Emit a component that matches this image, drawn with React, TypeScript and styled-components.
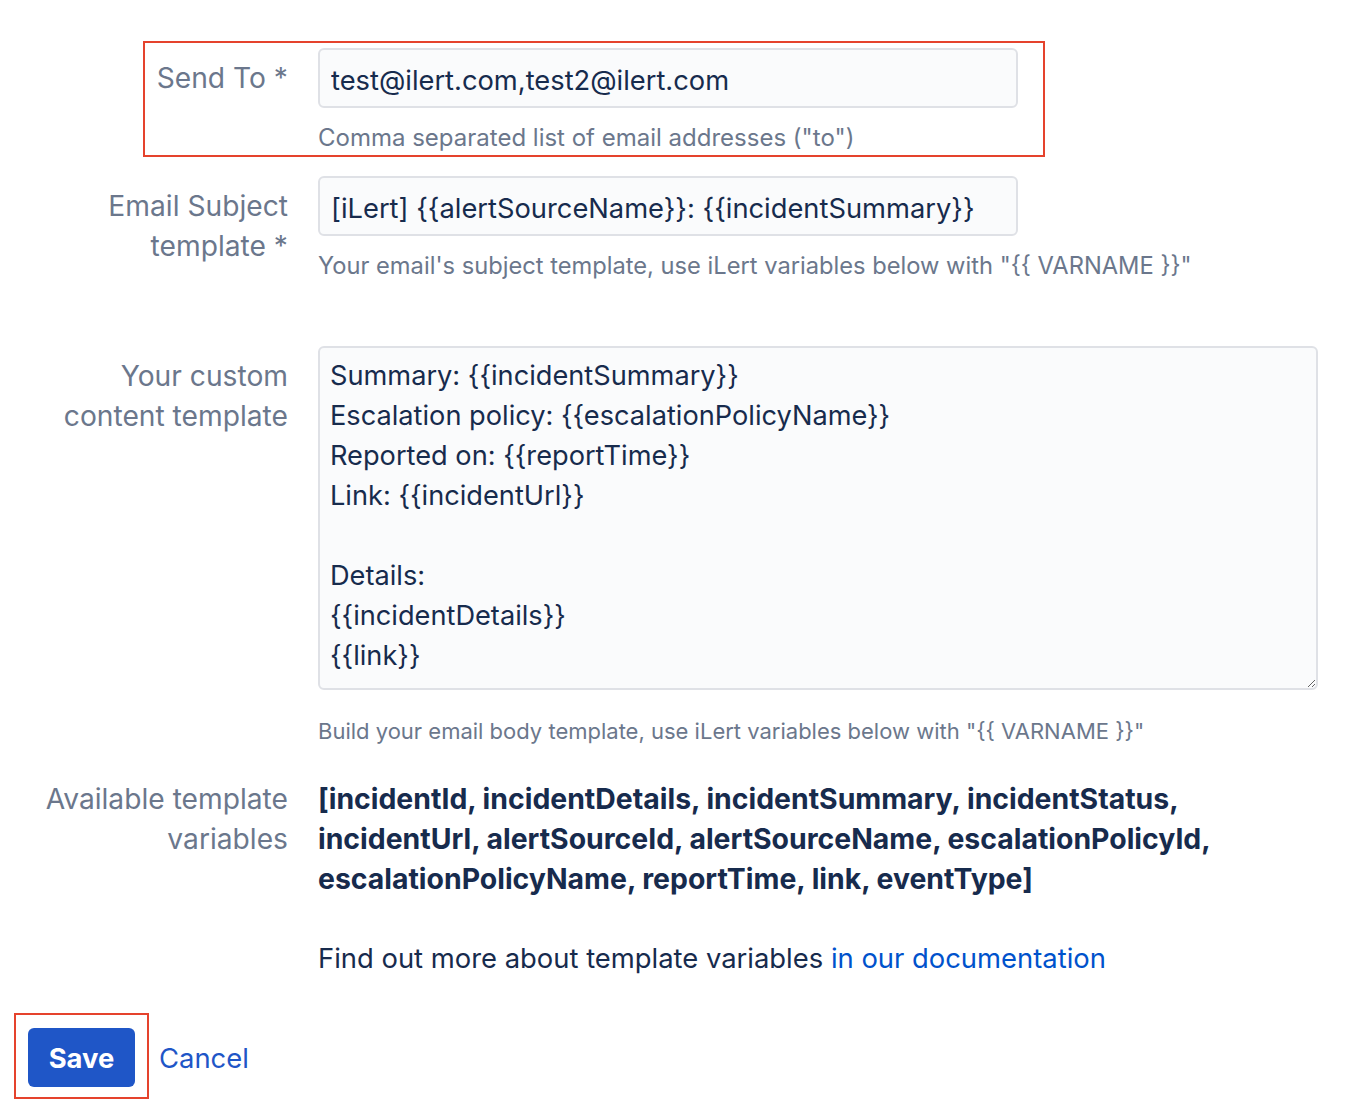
import React from "react";
import styled, { createGlobalStyle } from "styled-components";

const Global = createGlobalStyle`
  html, body { margin: 0; padding: 0; background: #ffffff; }
  body {
    font-family: Inter, "Noto Sans", "Liberation Sans", sans-serif;
    color: #172b4d;
    -webkit-font-smoothing: antialiased;
  }
`;

const Page = styled.div`
  width: 1372px;
  padding-top: 48px;
  padding-bottom: 20px;
  box-sizing: border-box;
`;

const Row = styled.div<{ $mt?: number }>`
  position: relative;
  display: grid;
  grid-template-columns: 288px 1000px;
  column-gap: 30px;
  margin-top: ${(p) => p.$mt ?? 0}px;
`;

const Label = styled.label<{ $pt?: number }>`
  text-align: right;
  font-size: 28.2px;
  line-height: 40px;
  color: #6b778c;
  padding-top: ${(p) => p.$pt ?? 10}px;
`;

const Field = styled.div`
  display: flex;
  flex-direction: column;
`;

const Input = styled.input`
  box-sizing: border-box;
  width: 700px;
  height: 60px;
  border: 2px solid #dfe1e6;
  border-radius: 6px;
  background: #fafbfc;
  padding: 10px 11px 6px 11px;
  font-family: inherit;
  font-size: 27.3px;
  line-height: 40px;
  color: #172b4d;
  outline: none;
`;

const TextArea = styled.textarea`
  box-sizing: border-box;
  width: 1000px;
  height: 344px;
  border: 2px solid #dfe1e6;
  border-radius: 6px;
  background: #fafbfc;
  padding: 8px 11px 8px 10px;
  font-family: inherit;
  font-size: 27.2px;
  line-height: 40px;
  color: #172b4d;
  outline: none;
  resize: vertical;
`;

const Helper = styled.div<{ $size?: number; $mt?: number }>`
  margin-top: ${(p) => p.$mt ?? 14}px;
  font-size: ${(p) => p.$size ?? 23.8}px;
  line-height: 32px;
  color: #6b778c;
`;

const Vars = styled.div`
  font-size: 28.4px;
  line-height: 40px;
  font-weight: 700;
  color: #172b4d;
`;

const Text = styled.div`
  font-size: 27.4px;
  line-height: 40px;
  color: #172b4d;
  margin-top: 39px;
`;

const Link = styled.a`
  color: #0052cc;
  text-decoration: none;
`;

const Actions = styled.div`
  position: relative;
  display: flex;
  align-items: center;
  gap: 24px;
  margin-top: 50px;
  padding-left: 28px;
`;

const SaveButton = styled.button`
  height: 59px;
  width: 107px;
  border: none;
  border-radius: 6px;
  background: #1f56c7;
  color: #ffffff;
  font-family: inherit;
  font-weight: 700;
  font-size: 27.4px;
  cursor: pointer;
`;

const CancelLink = styled.a`
  color: #1f56c7;
  font-size: 27.4px;
  text-decoration: none;
`;

const Annotation = styled.div<{ $l: number; $t: number; $w: number; $h: number }>`
  position: absolute;
  left: ${(p) => p.$l}px;
  top: ${(p) => p.$t}px;
  width: ${(p) => p.$w}px;
  height: ${(p) => p.$h}px;
  border: 2px solid #e5432d;
  box-sizing: border-box;
  pointer-events: none;
`;

const body = `Summary: {{incidentSummary}}
Escalation policy: {{escalationPolicyName}}
Reported on: {{reportTime}}
Link: {{incidentUrl}}

Details:
{{incidentDetails}}
{{link}}`;

export default function App() {
  return (
    <>
      <Global />
      <Page>
        <Row>
          <Label>Send To *</Label>
          <Field>
            <Input defaultValue="test@ilert.com,test2@ilert.com" />
            <Helper $size={24}>Comma separated list of email addresses ("to")</Helper>
          </Field>
          <Annotation $l={143} $t={-7} $w={902} $h={116} />
        </Row>
        <Row $mt={22}>
          <Label>
            Email Subject
            <br />
            template *
          </Label>
          <Field>
            <Input defaultValue="[iLert] {{alertSourceName}}: {{incidentSummary}}" />
            <Helper $size={23.7}>Your email's subject template, use iLert variables below with "{"{{"} VARNAME {"}}"}"</Helper>
          </Field>
        </Row>
        <Row $mt={64}>
          <Label>
            Your custom
            <br />
            content template
          </Label>
          <Field>
            <TextArea defaultValue={body} />
            <Helper $size={22} $mt={25}>
              Build your email body template, use iLert variables below with "{"{{"} VARNAME {"}}"}"
            </Helper>
          </Field>
        </Row>
        <Row $mt={32}>
          <Label $pt={0}>
            Available template
            <br />
            variables
          </Label>
          <Field>
            <Vars>
              [incidentId, incidentDetails, incidentSummary, incidentStatus,
              <br />
              incidentUrl, alertSourceId, alertSourceName, escalationPolicyId,
              <br />
              escalationPolicyName, reportTime, link, eventType]
            </Vars>
            <Text>
              Find out more about template variables <Link href="#">in our documentation</Link>
            </Text>
          </Field>
        </Row>
        <Actions>
          <SaveButton>Save</SaveButton>
          <CancelLink href="#">Cancel</CancelLink>
          <Annotation $l={14} $t={-15} $w={135} $h={86} />
        </Actions>
      </Page>
    </>
  );
}
